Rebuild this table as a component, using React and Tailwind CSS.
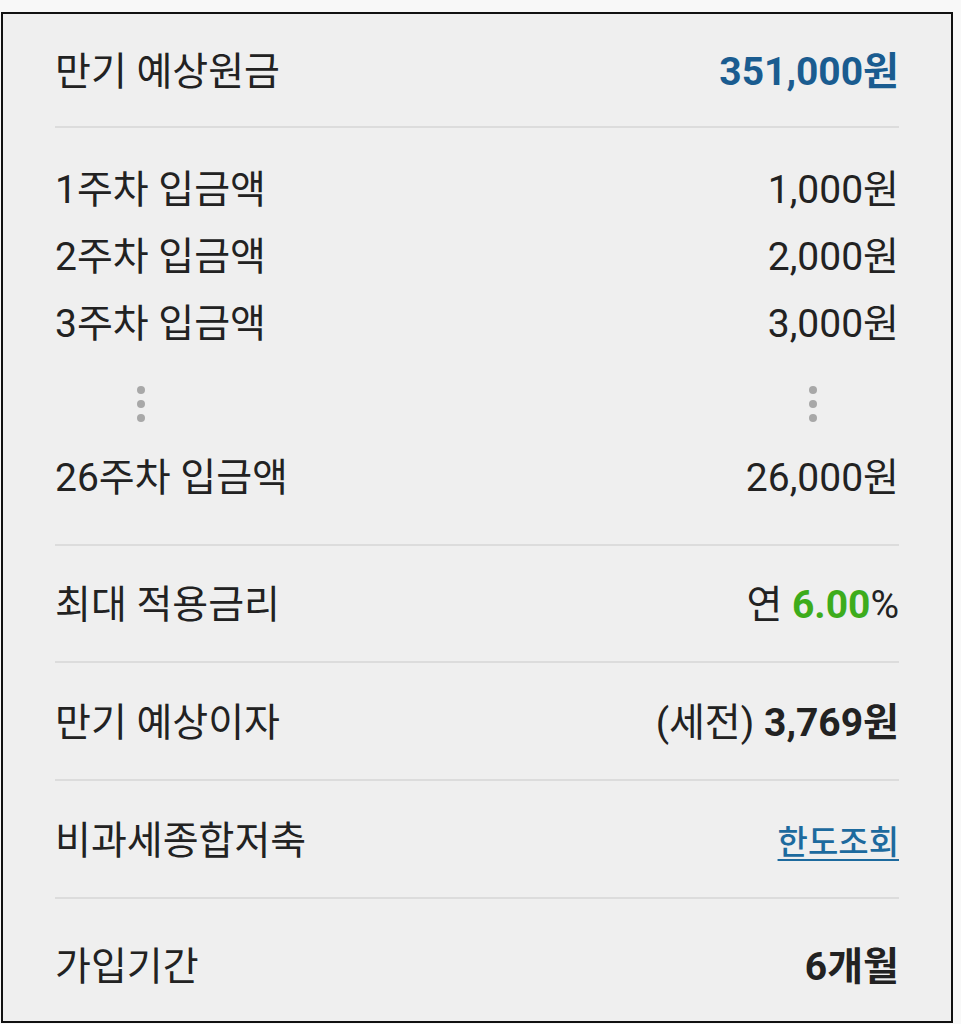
import React from "react";

const weekly = [
  { label: "1주차 입금액", amount: "1,000원" },
  { label: "2주차 입금액", amount: "2,000원" },
  { label: "3주차 입금액", amount: "3,000원" },
];

const Dots = () => (
  <div className="flex flex-col gap-[6px]">
    <span className="block w-[8px] h-[8px] rounded-full bg-[#a8a8a8]" />
    <span className="block w-[8px] h-[8px] rounded-full bg-[#a8a8a8]" />
    <span className="block w-[8px] h-[8px] rounded-full bg-[#a8a8a8]" />
  </div>
);

const Row = ({ label, children, className = "" }) => (
  <div className={`flex items-center justify-between pt-[4px] ${className}`}>
    <span>{label}</span>
    <span>{children}</span>
  </div>
);

const App = () => {
  return (
    <div
      className="min-h-screen bg-[#f8f8f8] pt-[12px] text-[39px] leading-none text-[#222222]"
      style={{ fontFamily: 'Roboto, "Noto Sans CJK KR", sans-serif' }}
    >
      <div className="ml-[1px] w-[952px] h-[1011px] border-2 border-[#111111] bg-[#efefef] px-[52px] overflow-hidden">
        {/* 만기 예상원금 */}
        <Row label="만기 예상원금" className="h-[114px] border-b-2 border-[#dcdcdc]">
          <span className="font-bold text-[#1a5c90]">351,000원</span>
        </Row>

        {/* 주차별 입금액 */}
        <div className="pt-[27px] pb-[34px] border-b-2 border-[#dcdcdc]">
          {weekly.map((item) => (
            <Row key={item.label} label={item.label} className="h-[67px]">
              {item.amount}
            </Row>
          ))}
          <div className="h-[87px] pt-[8px] flex items-center justify-between pl-[82px] pr-[82px]">
            <Dots />
            <Dots />
          </div>
          <Row label="26주차 입금액" className="h-[67px]">
            26,000원
          </Row>
        </div>

        <Row label="최대 적용금리" className="h-[117px] border-b-2 border-[#dcdcdc]">
          연 <span className="font-bold text-[#3dac1c]">6.00</span>%
        </Row>

        <Row label="만기 예상이자" className="h-[118px] border-b-2 border-[#dcdcdc]">
          (세전) <span className="font-bold">3,769원</span>
        </Row>

        <Row label="비과세종합저축" className="h-[118px] border-b-2 border-[#dcdcdc]">
          <a href="#" className="text-[33px] font-medium text-[#1d6a9e] underline underline-offset-[5px] decoration-2">
            한도조회
          </a>
        </Row>

        <Row label="가입기간" className="h-[122px] pt-[14px]">
          <span className="font-bold">6개월</span>
        </Row>
      </div>
    </div>
  );
};

export default App;
